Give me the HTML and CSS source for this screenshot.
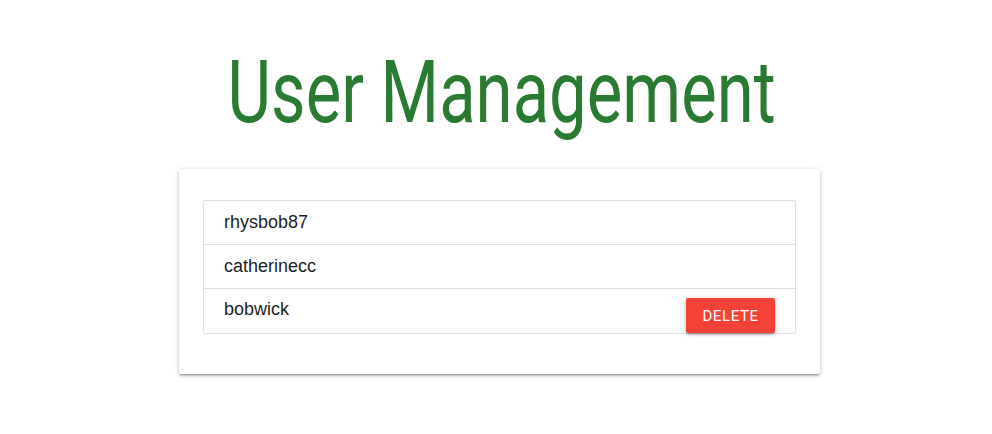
FILE: index.html
```html
<!DOCTYPE html>
<html>
<head>
<meta charset="utf-8">
<link rel="stylesheet" href="styles.css">
</head>
<body>
<main class="page">
  <h1 class="title"><span class="title-text">User Management</span></h1>
  <section class="card">
    <ul class="collection">
      <li class="item"><span class="name">rhysbob87</span></li>
      <li class="item"><span class="name">catherinecc</span></li>
      <li class="item item-last"><span class="name">bobwick</span><button class="btn">Delete</button></li>
    </ul>
  </section>
</main>
</body>
</html>
```
FILE: styles.css
```css
html, body {
  margin: 0;
  padding: 0;
  background: #ffffff;
}
.page {
  width: 641px;
  margin-left: 179px;
  padding-bottom: 60px;
  display: flex;
  flex-direction: column;
}
.title {
  margin: 48px 0 33px 0;
  height: 88px;
  display: flex;
  justify-content: center;
  font-family: Roboto, "Liberation Sans", sans-serif;
  font-weight: 400;
  font-size: 88px;
  line-height: 88px;
  color: #2a7b32;
  white-space: nowrap;
  padding-left: 5px;
}
.title-text {
  display: inline-block;
  transform: scaleX(0.762);
  transform-origin: center;
}
.card {
  background: #fff;
  border-radius: 2px;
  padding: 24px;
  box-shadow: 0 2px 2px 0 rgba(0,0,0,0.16), 0 3px 1px -2px rgba(0,0,0,0.14), 0 1px 5px 0 rgba(0,0,0,0.22);
}
.collection {
  list-style: none;
  margin: 7px 0 16px 0;
  padding: 0;
  border: 1px solid #e0e0e0;
  border-radius: 2px;
}
.item {
  display: flex;
  justify-content: space-between;
  align-items: flex-start;
  padding: 10px 20px;
  border-bottom: 1px solid #e0e0e0;
  font-family: "Liberation Sans", Arial, sans-serif;
  font-size: 18px;
  line-height: 23px;
  color: #1e1e1e;
}
.item-last {
  border-bottom: 0;
  padding-bottom: 0;
  padding-top: 9px;
}
.btn {
  border: 0;
  border-radius: 2px;
  height: 35px;
  width: 89px;
  padding: 0;
  background: #f44336;
  color: #fff;
  font-family: Roboto, "Liberation Sans", sans-serif;
  font-weight: 400;
  font-size: 15px;
  letter-spacing: 0.6px;
  text-transform: uppercase;
  box-shadow: 0 2px 2px 0 rgba(0,0,0,0.14), 0 3px 1px -2px rgba(0,0,0,0.12), 0 1px 5px 0 rgba(0,0,0,0.2);
}
```
